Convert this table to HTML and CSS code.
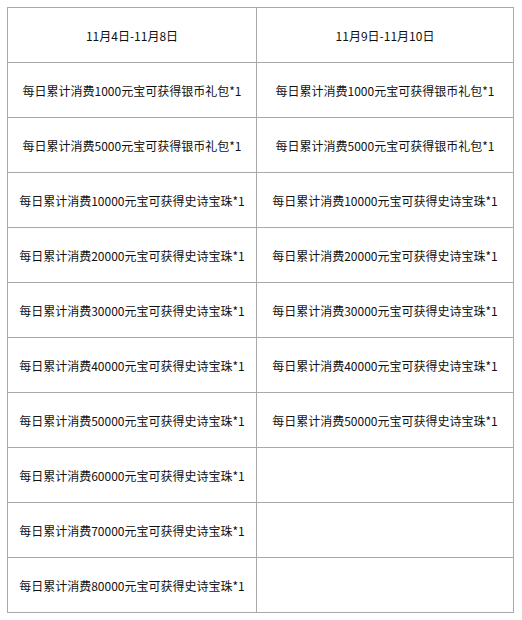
FILE: index.html
```html
<!DOCTYPE html>
<html lang="zh">
<head>
<meta charset="utf-8">
<link rel="stylesheet" href="styles.css">
</head>
<body>
<table class="rewards">
  <tr><td class="left">11月4日-11月8日</td><td class="right">11月9日-11月10日</td></tr>
  <tr><td class="left">每日累计消费1000元宝可获得银币礼包*1</td><td class="right">每日累计消费1000元宝可获得银币礼包*1</td></tr>
  <tr><td class="left">每日累计消费5000元宝可获得银币礼包*1</td><td class="right">每日累计消费5000元宝可获得银币礼包*1</td></tr>
  <tr><td class="left">每日累计消费10000元宝可获得史诗宝珠*1</td><td class="right">每日累计消费10000元宝可获得史诗宝珠*1</td></tr>
  <tr><td class="left">每日累计消费20000元宝可获得史诗宝珠*1</td><td class="right">每日累计消费20000元宝可获得史诗宝珠*1</td></tr>
  <tr><td class="left">每日累计消费30000元宝可获得史诗宝珠*1</td><td class="right">每日累计消费30000元宝可获得史诗宝珠*1</td></tr>
  <tr><td class="left">每日累计消费40000元宝可获得史诗宝珠*1</td><td class="right">每日累计消费40000元宝可获得史诗宝珠*1</td></tr>
  <tr><td class="left">每日累计消费50000元宝可获得史诗宝珠*1</td><td class="right">每日累计消费50000元宝可获得史诗宝珠*1</td></tr>
  <tr><td class="left">每日累计消费60000元宝可获得史诗宝珠*1</td><td class="right"></td></tr>
  <tr><td class="left">每日累计消费70000元宝可获得史诗宝珠*1</td><td class="right"></td></tr>
  <tr><td class="left">每日累计消费80000元宝可获得史诗宝珠*1</td><td class="right"></td></tr>
</table>
</body>
</html>
```
FILE: styles.css
```css
html, body {
  margin: 0;
  padding: 0;
  background: #ffffff;
}
body {
  padding: 7px 0 0 7px;
  font-family: "Noto Sans CJK SC", "Noto Sans", sans-serif;
  font-size: 12px;
  color: #111111;
}
.rewards {
  border-collapse: collapse;
  table-layout: fixed;
  width: 506px;
}
.rewards td {
  border: 1px solid #a9a9a9;
  height: 55px;
  padding: 2px 0 0 0;
  box-sizing: border-box;
  text-align: center;
  vertical-align: middle;
  line-height: 16px;
  white-space: nowrap;
}
.rewards td.left {
  width: 249px;
}
.rewards td.right {
  width: 257px;
}
```
